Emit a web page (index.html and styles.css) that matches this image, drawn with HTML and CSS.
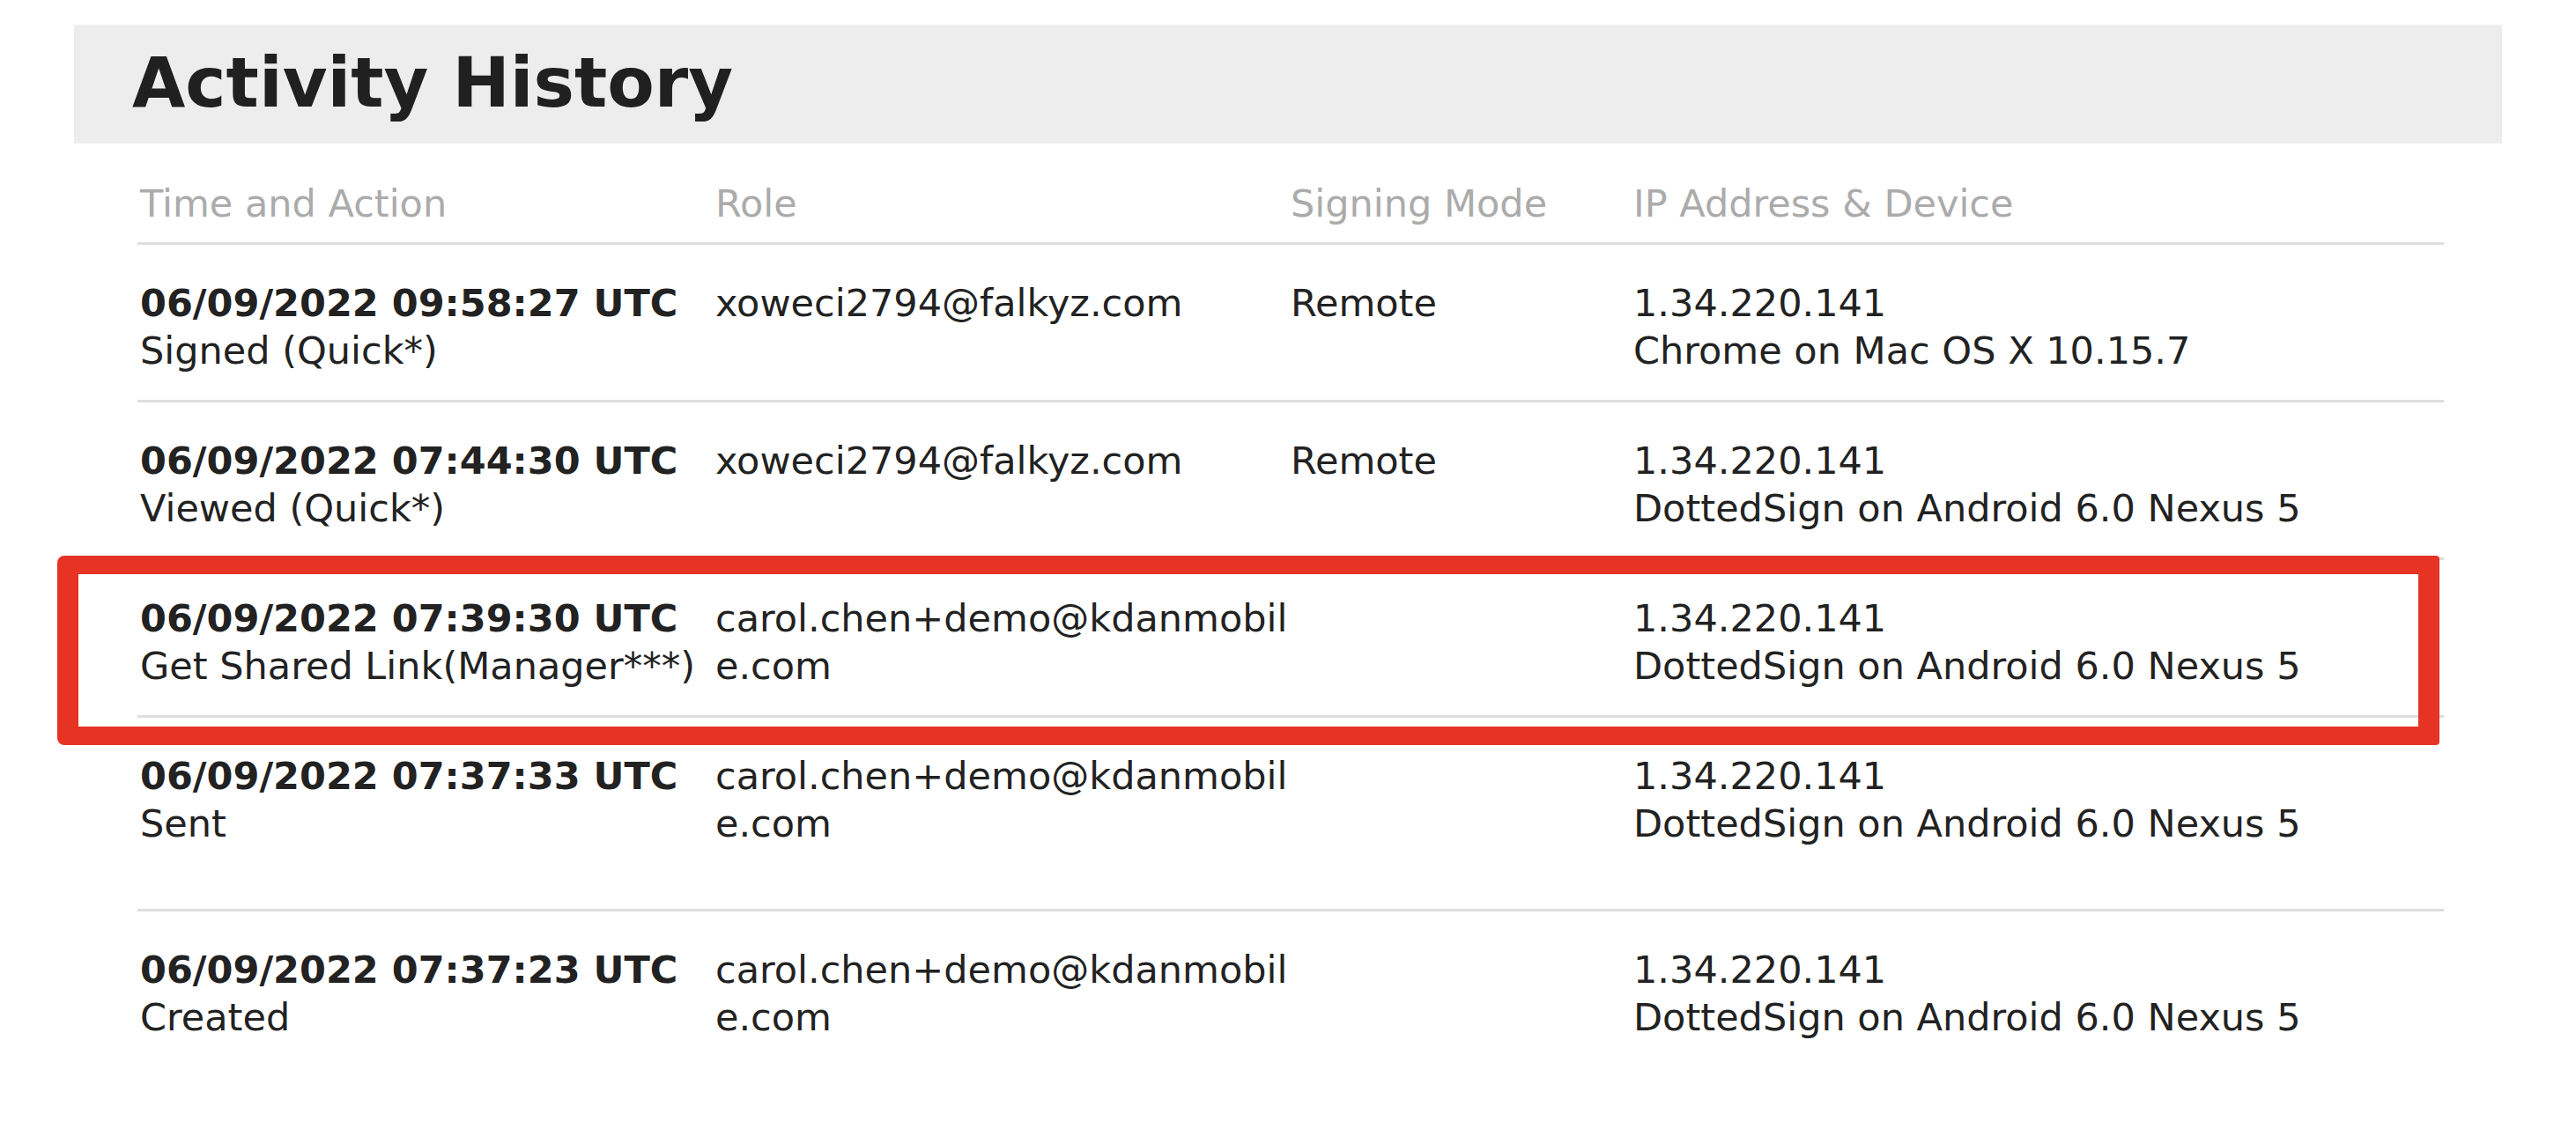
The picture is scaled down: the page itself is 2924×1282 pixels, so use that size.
FILE: index.html
```html
<!DOCTYPE html>
<html lang="en">
<head>
<meta charset="utf-8">
<title>Activity History</title>
<link rel="stylesheet" href="styles.css">
</head>
<body>
<main class="page">
  <header class="band">
    <h1 class="title">Activity History</h1>
  </header>
  <section class="table">
    <div class="row head">
      <div class="cell">Time and Action</div>
      <div class="cell">Role</div>
      <div class="cell">Signing Mode</div>
      <div class="cell">IP Address &amp; Device</div>
    </div>
    <div class="row">
      <div class="cell"><div class="time">06/09/2022 09:58:27 UTC</div><div>Signed (Quick*)</div></div>
      <div class="cell email">xoweci2794@falkyz.com</div>
      <div class="cell">Remote</div>
      <div class="cell"><div>1.34.220.141</div><div>Chrome on Mac OS X 10.15.7</div></div>
    </div>
    <div class="row">
      <div class="cell"><div class="time">06/09/2022 07:44:30 UTC</div><div>Viewed (Quick*)</div></div>
      <div class="cell email">xoweci2794@falkyz.com</div>
      <div class="cell">Remote</div>
      <div class="cell"><div>1.34.220.141</div><div>DottedSign on Android 6.0 Nexus 5</div></div>
    </div>
    <div class="row">
      <div class="cell"><div class="time">06/09/2022 07:39:30 UTC</div><div>Get Shared Link(Manager***)</div></div>
      <div class="cell email">carol.chen+demo@kdanmobile.com</div>
      <div class="cell"></div>
      <div class="cell"><div>1.34.220.141</div><div>DottedSign on Android 6.0 Nexus 5</div></div>
    </div>
    <div class="row tall">
      <div class="cell"><div class="time">06/09/2022 07:37:33 UTC</div><div>Sent</div></div>
      <div class="cell email">carol.chen+demo@kdanmobile.com</div>
      <div class="cell"></div>
      <div class="cell"><div>1.34.220.141</div><div>DottedSign on Android 6.0 Nexus 5</div></div>
    </div>
    <div class="row last">
      <div class="cell"><div class="time">06/09/2022 07:37:23 UTC</div><div>Created</div></div>
      <div class="cell email">carol.chen+demo@kdanmobile.com</div>
      <div class="cell"></div>
      <div class="cell"><div>1.34.220.141</div><div>DottedSign on Android 6.0 Nexus 5</div></div>
    </div>
  </section>
  <div class="highlight"></div>
</main>
</body>
</html>
```
FILE: styles.css
```css
html, body {
  margin: 0;
  padding: 0;
  background: #ffffff;
}

body {
  font-family: "DejaVu Sans", Verdana, sans-serif;
  color: #222222;
}

.page {
  position: relative;
  padding-top: 28px;
  width: 2924px;
  height: 1282px;
  box-sizing: border-box;
}

.band {
  margin-left: 84px;
  width: 2756px;
  background: #ededed;
  padding: 21px 0 23px 66px;
  box-sizing: border-box;
}

.title {
  margin: 0;
  font-size: 78px;
  line-height: 91px;
  font-weight: bold;
  color: #202020;
}

.table {
  margin-left: 156px;
  width: 2618px;
  padding-top: 41px;
}

.row {
  display: grid;
  grid-template-columns: 656px 653px 389px 1fr;
  font-size: 43px;
  line-height: 54px;
  padding: 39px 0 29px 0;
  border-bottom: 3px solid #dedede;
}

.row.head {
  padding: 0 0 17px 0;
  color: #ababab;
}

.row.tall {
  padding-bottom: 70px;
}

.row.last {
  border-bottom: none;
}

.cell {
  padding-left: 0;
  white-space: nowrap;
}

.cell:first-child {
  padding-left: 3px;
}

.email {
  white-space: normal;
  word-break: break-all;
}

.time {
  font-weight: bold;
}

.highlight {
  position: absolute;
  left: 65px;
  top: 631px;
  width: 2704px;
  height: 215px;
  box-sizing: border-box;
  border-style: solid;
  border-color: #e63323;
  border-width: 21px 24px;
  border-radius: 8px 4px 4px 8px;
}
```
